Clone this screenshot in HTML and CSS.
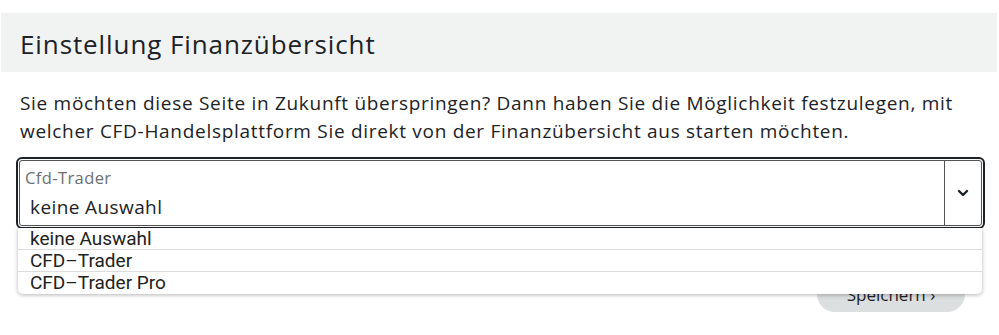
FILE: index.html
```html
<!DOCTYPE html>
<html lang="de">
<head>
    <meta charset="UTF-8">
    <meta name="viewport" content="width=device-width, initial-scale=1.0">
    <title>Einstellung Finanzübersicht</title>
    <link rel="stylesheet" href="styles.css">
</head>
<body>
    <header class="section-head">
        <h2>Einstellung Finanzübersicht</h2>
    </header>
    <div class="content">
        <p class="intro">Sie möchten diese Seite in Zukunft überspringen? Dann haben Sie die Möglichkeit festzulegen, mit welcher CFD-Handelsplattform Sie direkt von der Finanzübersicht aus starten möchten.</p>

        <!-- Auswahl Handelsplattform -->
        <div class="select-wrap">
            <div class="select-box">
                <div class="select-value">
                    <span class="select-label">Cfd-Trader</span>
                    <span class="select-current">keine Auswahl</span>
                </div>
                <div class="select-arrow">
                    <svg width="12" height="8" viewBox="0 0 12 8"><polyline points="2,2 6,6 10,2" fill="none" stroke="#1c2226" stroke-width="2.4" stroke-linecap="round" stroke-linejoin="round"/></svg>
                </div>
            </div>
            <ul class="select-list">
                <li>keine Auswahl</li>
                <li>CFD–Trader</li>
                <li>CFD–Trader Pro</li>
            </ul>
        </div>

        <div class="actions">
            <button class="btn">Speichern ›</button>
        </div>
    </div>
</body>
</html>
```

FILE: styles.css
```css
body {
    margin: 0;
    padding: 0;
    min-height: 335px;
    background: #fff;
    color: #1c2226;
    font-family: "Open Sans", Lato, sans-serif;
}
.section-head {
    margin: 13px 2px 0 1px;
    height: 59px;
    background: #f1f3f3;
    display: flex;
    align-items: center;
    padding-left: 19px;
}
.section-head h2 {
    margin: 0;
    font-size: 26px;
    font-weight: 400;
    letter-spacing: 0.9px;
    padding-top: 2px;
}
.content {
    padding: 0 14px 0 16px;
}
.intro {
    margin: 17px 0 0 4px;
    font-size: 19px;
    line-height: 28px;
    letter-spacing: 0.7px;
}
.select-wrap {
    position: relative;
    margin-top: 15px;
}
.select-box {
    display: flex;
    height: 64px;
    margin: 3px;
    border: 1px solid #555;
    border-radius: 3px;
    outline: 2px solid #1c2226;
    outline-offset: 1px;
    background: #fff;
}
.select-value {
    flex: 1;
    display: flex;
    flex-direction: column;
    padding: 7px 0 0 5px;
}
.select-label {
    font-size: 16.5px;
    color: #6b6f72;
    line-height: 20px;
    letter-spacing: 0.4px;
}
.select-current {
    font-size: 19px;
    margin-top: 6px;
    padding-left: 5px;
    letter-spacing: 0.4px;
}
.select-arrow {
    width: 36px;
    border-left: 1px solid #555;
    display: flex;
    align-items: center;
    justify-content: center;
}
.select-list {
    position: absolute;
    left: 2px;
    right: 3px;
    top: 68px;
    margin: 0;
    padding: 0;
    list-style: none;
    background: #fff;
    border-radius: 0 0 5px 5px;
    box-shadow: 0 1px 4px rgba(0, 0, 0, 0.3);
    z-index: 2;
    font-family: Roboto, sans-serif;
}
.select-list li {
    height: 21px;
    line-height: 21px;
    font-size: 19px;
    padding-left: 12px;
    border-bottom: 1px solid #ddd;
    color: #222;
}
.select-list li:last-child {
    height: 22px;
    border-bottom: none;
}
.actions {
    display: flex;
    justify-content: flex-end;
    margin-top: 50px;
    padding-right: 20px;
}
.btn {
    width: 148px;
    height: 36px;
    border: none;
    border-radius: 18px;
    background: #dcdfe0;
    color: #1c2226;
    font-family: "Open Sans", sans-serif;
    font-size: 17px;
}
```
